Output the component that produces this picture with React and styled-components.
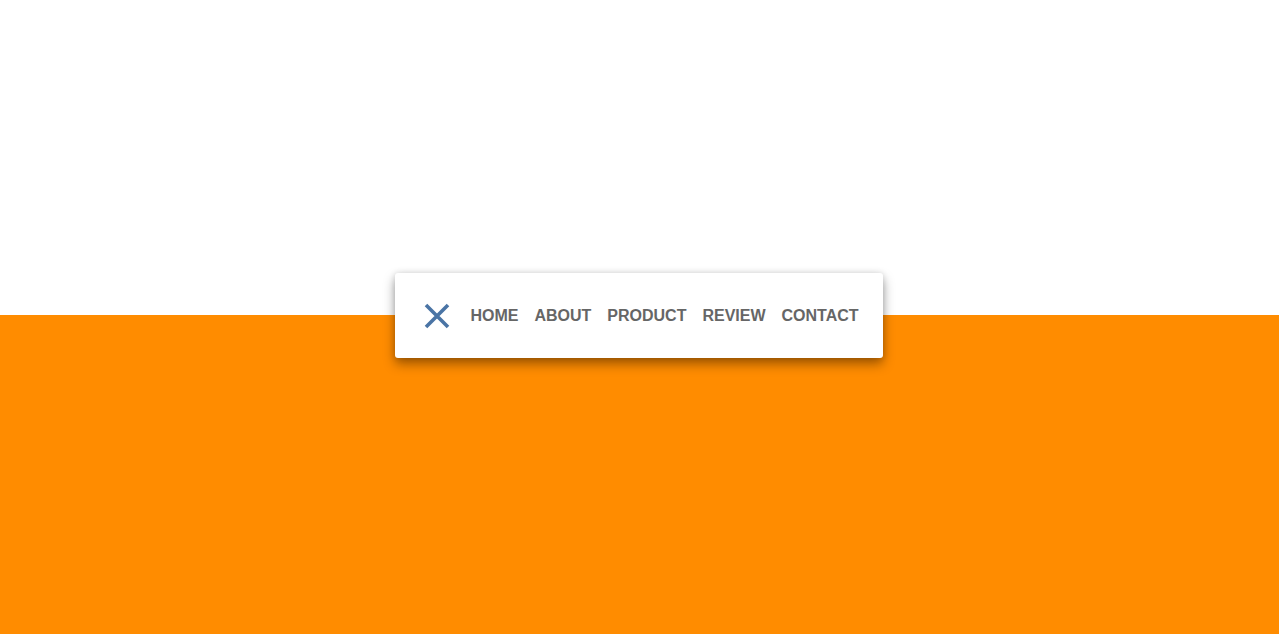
import React from 'react';
import styled, { createGlobalStyle } from 'styled-components';

const GlobalStyle = createGlobalStyle`
  html, body {
    margin: 0;
    padding: 0;
  }
  body {
    font-family: "Liberation Sans", Arial, sans-serif;
    background: #fff;
  }
`;

const Layers = styled.div`
  display: grid;
  grid-template-columns: 1fr;
  grid-template-rows: 315px 1fr;
  height: 634px;
`;

const Band = styled.div`
  grid-column: 1;
  grid-row: ${props => props.row};
  background: ${props => props.color};
`;

const Stage = styled.div`
  grid-column: 1;
  grid-row: 1 / 3;
  display: flex;
  justify-content: center;
  align-items: center;
  padding: 0 1px 3px 0;
`;

const Menu = styled.nav`
  display: flex;
  align-items: center;
  height: 85px;
  box-sizing: border-box;
  padding: 0 24px 0 29px;
  background: #fff;
  border-radius: 3px;
  box-shadow: 0 6px 12px rgba(0, 0, 0, 0.38), 0 0 6px rgba(0, 0, 0, 0.12);
`;

const Close = styled.button`
  display: flex;
  align-items: center;
  justify-content: center;
  width: 26px;
  height: 26px;
  padding: 0;
  margin-right: 20px;
  border: none;
  background: none;
  cursor: pointer;
`;

const Links = styled.ul`
  display: flex;
  gap: 16px;
  margin: 0;
  padding: 0;
  list-style: none;
`;

const Link = styled.a`
  font-size: 16px;
  font-weight: bold;
  color: #666;
  text-decoration: none;
  text-transform: uppercase;
  line-height: 20px;
`;

const items = ['Home', 'About', 'Product', 'Review', 'Contact'];

const App = () => (
  <>
    <GlobalStyle />
    <Layers>
      <Band row={1} color="#fff" />
      <Band row={2} color="#ff8c00" />
      <Stage>
        <Menu>
          <Close aria-label="Close menu">
            <svg width="26" height="26" viewBox="0 0 26 26">
              <path d="M2 2 L24 24 M24 2 L2 24" stroke="#4a74a5" strokeWidth="3.6" />
            </svg>
          </Close>
          <Links>
            {items.map(item => (
              <li key={item}>
                <Link href="#">{item}</Link>
              </li>
            ))}
          </Links>
        </Menu>
      </Stage>
    </Layers>
  </>
);

export default App;
